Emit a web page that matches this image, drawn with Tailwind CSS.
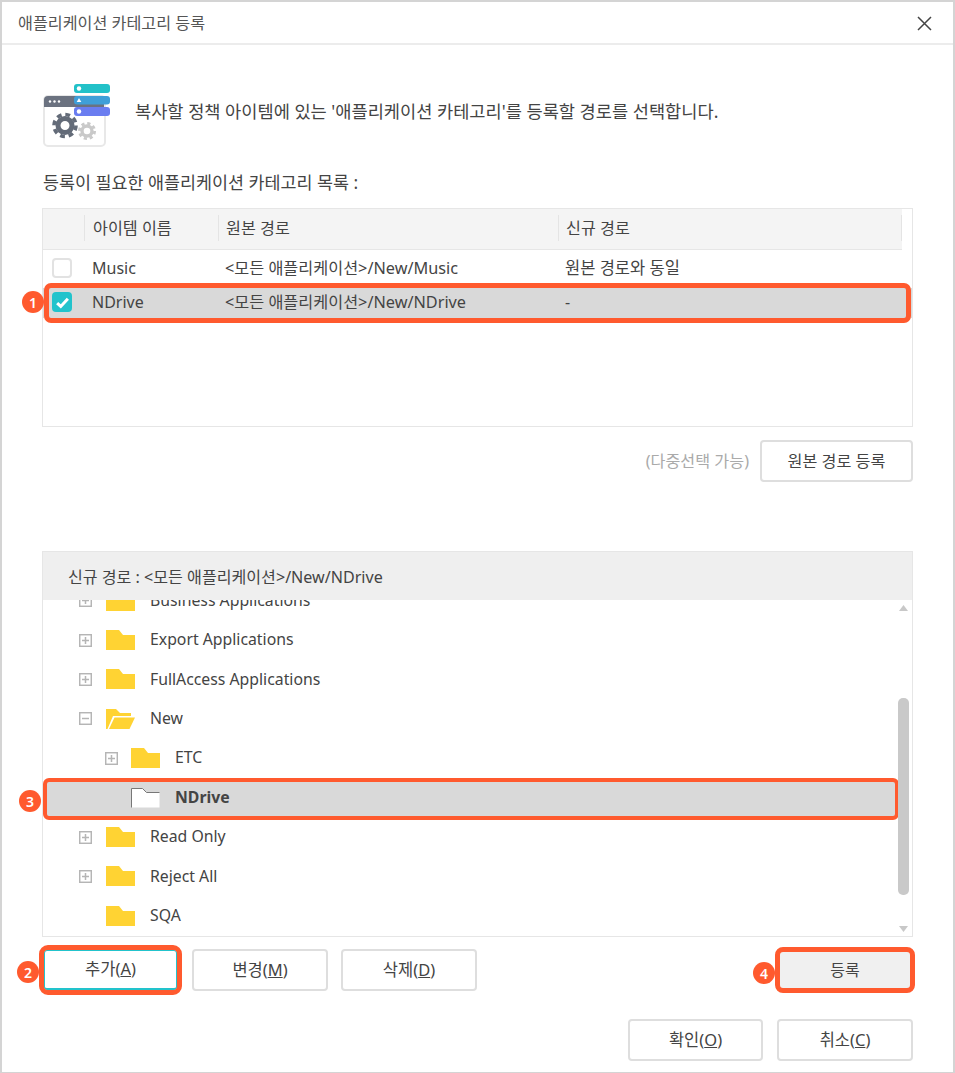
<!DOCTYPE html>
<html lang="ko">
<head>
    <meta charset="UTF-8">
    <title>애플리케이션 카테고리 등록</title>
    <script src="https://cdn.jsdelivr.net/npm/@tailwindcss/browser@4"></script>
</head>
<body class="bg-white font-['Noto_Sans','Noto_Sans_CJK_KR',sans-serif] text-[16px] text-[#444]">
<div class="w-[955px] h-[1073px] border-2 border-[#d4d4d4] border-b-[1px] flex flex-col overflow-hidden">

    <!-- title bar -->
    <div class="h-[43px] pt-[2px] shrink-0 border-b-2 border-[#ececec] flex items-center justify-between pl-[16px] pr-[21px]">
        <span class="text-[16.2px] text-[#555]">애플리케이션 카테고리 등록</span>
        <svg class="w-[15px] h-[15px]" viewBox="0 0 15 15" fill="none" stroke="#444" stroke-width="1.5"><path d="M1 1l13 13M14 1L1 14"/></svg>
    </div>

    <div class="flex-1 flex flex-col pl-[40px] pr-[40px]">
        <!-- intro -->
        <div class="flex items-center h-[76px] mt-[32px] gap-[23px]">
            <svg class="w-[70px] h-[66px] shrink-0" viewBox="0 0 70 66">
                <rect x="2" y="14" width="61" height="50" rx="4" fill="#fff" stroke="#e8e8e8" stroke-width="2"/>
                <path d="M2 18a4 4 0 0 1 4-4h56v11H2z" fill="#6b7280"/>
                <circle cx="8" cy="19.5" r="1.2" fill="#fff"/><circle cx="12.5" cy="19.5" r="1.2" fill="#fff"/><circle cx="17" cy="19.5" r="1.2" fill="#fff"/>
                <circle cx="23" cy="43.5" r="7" fill="none" stroke="#636b78" stroke-width="5"/>
                <circle cx="23" cy="43.5" r="11" fill="none" stroke="#636b78" stroke-width="3.6" stroke-dasharray="4.8 3.84"/>
                <circle cx="45" cy="49" r="5" fill="none" stroke="#c9c9c9" stroke-width="3.4"/>
                <circle cx="45" cy="49" r="7.6" fill="none" stroke="#c9c9c9" stroke-width="2.8" stroke-dasharray="3.2 2.77"/>
                <rect x="32" y="2" width="36" height="9" rx="3" fill="#22c1c8"/>
                <rect x="32" y="14" width="36" height="8.5" rx="3" fill="#3f9fd8"/>
                <rect x="32" y="25" width="36" height="9" rx="3" fill="#6a7df0"/>
                <circle cx="37" cy="6.5" r="2.2" fill="#fff"/><path d="M37 16l2.3 4h-4.6z" fill="#fff"/><circle cx="37" cy="29.5" r="2.2" fill="#fff"/>
            </svg>
            <p class="mb-[7px] text-[17.6px] text-[#444]">복사할 정책 아이템에 있는 '애플리케이션 카테고리'를 등록할 경로를 선택합니다.</p>
        </div>

        <p class="mt-[18px] h-[22px] leading-[22px] pl-px text-[17.4px] text-[#444]">등록이 필요한 애플리케이션 카테고리 목록 :</p>

        <!-- category table -->
        <div class="mt-[15px] h-[219px] w-[871px] border border-[#e6e6e6] relative">
            <div class="h-[41px] pb-[2px] w-[859px] bg-[#f4f4f4] border-b border-[#e6e6e6] flex items-center text-[16.2px]">
                <div class="w-[41px] h-[26px]"></div>
                <div class="w-[134px] h-[26px] border-l border-[#e4e4e4] pl-[8px] leading-[26px]">아이템 이름</div>
                <div class="w-[340px] h-[26px] border-l border-[#e4e4e4] pl-[7px] leading-[26px]">원본 경로</div>
                <div class="flex-1 h-[26px] border-l border-r border-[#e4e4e4] pl-[7px] leading-[26px]">신규 경로</div>
            </div>
            <div class="h-[37px] mt-px pb-[3px] flex items-center">
                <div class="w-[41px] pl-[9px]"><div class="w-[20px] h-[20px] rounded-[4px] border-2 border-[#e2e2e2] bg-white"></div></div>
                <div class="w-[134px] pl-[8px]">Music</div>
                <div class="w-[340px] pl-[7px] text-[16.25px]">&lt;모든 애플리케이션&gt;/New/Music</div>
                <div class="pl-[7px] text-[16.5px]">원본 경로와 동일</div>
            </div>
            <div class="h-[30px] pb-[2px] bg-[#d9d9d9] flex items-center relative">
                <div class="w-[41px] pl-[9px]">
                    <div class="w-[20px] h-[20px] rounded-[4px] bg-[#22c3cc] flex items-center justify-center">
                        <svg class="w-[15px] h-[15px]" viewBox="0 0 14 14" fill="none" stroke="#fff" stroke-width="2.8"><path d="M2 7.5l3.4 3.2L12 3.5"/></svg>
                    </div>
                </div>
                <div class="w-[134px] pl-[8px]">NDrive</div>
                <div class="w-[340px] pl-[7px] text-[16.25px]">&lt;모든 애플리케이션&gt;/New/NDrive</div>
                <div class="pl-[7px]">-</div>
                <div class="absolute left-[1px] right-[1px] top-[-5px] bottom-[-5px] border-[5px] border-[#ff5a2e] rounded-[7px]"></div>
                <div class="absolute left-[-21px] top-[3px] w-[22px] h-[22px] rounded-full bg-[#ff5a2e] text-white text-[14px] font-semibold flex items-center justify-center">1</div>
            </div>
        </div>

        <div class="mt-[13px] flex items-center justify-end gap-[11px]">
            <span class="text-[16.2px] text-[#aaa]">(다중선택 가능)</span>
            <button class="w-[153px] h-[42px] bg-white border-2 border-[#dedede] rounded-[4px] text-[16.2px]">원본 경로 등록</button>
        </div>

        <!-- new path tree -->
        <div class="mt-[69px] h-[386px] w-[871px] border border-[#e6e6e6] flex flex-col relative">
            <div class="h-[48px] pt-[3px] shrink-0 bg-[#efefef] flex items-center pl-[25px] text-[16.1px]">신규 경로 : &lt;모든 애플리케이션&gt;/New/NDrive</div>
            <div class="flex-1 overflow-hidden relative text-[15.8px]">
                <div class="-mt-[19px]">
                    <div class="h-[39.4px] flex items-center">
                        <svg class="ml-[36px] w-[13px] h-[13px]" viewBox="0 0 13 13" fill="none" stroke="#b5b5b5" stroke-width="1.5"><rect x=".7" y=".7" width="11.6" height="11.6"/><path d="M3 6.5h7M6.5 3v7"/></svg>
                        <svg class="ml-[14px] w-[29px] h-[20px]" viewBox="0 0 29 20"><path d="M0 0h13l4 5h12v15H0z" fill="#ffd333"/></svg>
                        <span class="ml-[15px]">Business Applications</span>
                    </div>
                    <div class="h-[39.4px] flex items-center">
                        <svg class="ml-[36px] w-[13px] h-[13px]" viewBox="0 0 13 13" fill="none" stroke="#b5b5b5" stroke-width="1.5"><rect x=".7" y=".7" width="11.6" height="11.6"/><path d="M3 6.5h7M6.5 3v7"/></svg>
                        <svg class="ml-[14px] w-[29px] h-[20px]" viewBox="0 0 29 20"><path d="M0 0h13l4 5h12v15H0z" fill="#ffd333"/></svg>
                        <span class="ml-[15px]">Export Applications</span>
                    </div>
                    <div class="h-[39.4px] flex items-center">
                        <svg class="ml-[36px] w-[13px] h-[13px]" viewBox="0 0 13 13" fill="none" stroke="#b5b5b5" stroke-width="1.5"><rect x=".7" y=".7" width="11.6" height="11.6"/><path d="M3 6.5h7M6.5 3v7"/></svg>
                        <svg class="ml-[14px] w-[29px] h-[20px]" viewBox="0 0 29 20"><path d="M0 0h13l4 5h12v15H0z" fill="#ffd333"/></svg>
                        <span class="ml-[15px]">FullAccess Applications</span>
                    </div>
                    <div class="h-[39.4px] flex items-center">
                        <svg class="ml-[36px] w-[13px] h-[13px]" viewBox="0 0 13 13" fill="none" stroke="#b5b5b5" stroke-width="1.5"><rect x=".7" y=".7" width="11.6" height="11.6"/><path d="M3 6.5h7"/></svg>
                        <svg class="ml-[14px] w-[29px] h-[20px]" viewBox="0 0 29 20"><path d="M0 20V0h10l4 4h11v3H7L1.5 20z" fill="#ffd333"/><path d="M8.5 8.5H29L23.5 20H3z" fill="#ffd333"/></svg>
                        <span class="ml-[15px]">New</span>
                    </div>
                    <div class="h-[39.4px] flex items-center">
                        <svg class="ml-[62px] w-[13px] h-[13px]" viewBox="0 0 13 13" fill="none" stroke="#b5b5b5" stroke-width="1.5"><rect x=".7" y=".7" width="11.6" height="11.6"/><path d="M3 6.5h7M6.5 3v7"/></svg>
                        <svg class="ml-[13px] w-[29px] h-[20px]" viewBox="0 0 29 20"><path d="M0 0h13l4 5h12v15H0z" fill="#ffd333"/></svg>
                        <span class="ml-[15px]">ETC</span>
                    </div>
                    <div class="h-[39.4px] flex items-center relative">
                        <div class="absolute left-0 w-[856px] top-0 bottom-[-3px] bg-[#d9d9d9] border-[4px] border-[#ff5a2e] rounded-[6px]"></div>
                        <svg class="relative ml-[88px] w-[29px] h-[20px]" viewBox="0 0 29 20"><path d="M.5 19.5V.5h11l4 4h13v15z" fill="#fff"/><path d="M.5 19.5V.5h11l4 4h13" fill="none" stroke="#777"/></svg>
                        <span class="relative ml-[15px] font-bold">NDrive</span>
                    </div>
                    <div class="h-[39.4px] flex items-center">
                        <svg class="ml-[36px] w-[13px] h-[13px]" viewBox="0 0 13 13" fill="none" stroke="#b5b5b5" stroke-width="1.5"><rect x=".7" y=".7" width="11.6" height="11.6"/><path d="M3 6.5h7M6.5 3v7"/></svg>
                        <svg class="ml-[14px] w-[29px] h-[20px]" viewBox="0 0 29 20"><path d="M0 0h13l4 5h12v15H0z" fill="#ffd333"/></svg>
                        <span class="ml-[15px]">Read Only</span>
                    </div>
                    <div class="h-[39.4px] flex items-center">
                        <svg class="ml-[36px] w-[13px] h-[13px]" viewBox="0 0 13 13" fill="none" stroke="#b5b5b5" stroke-width="1.5"><rect x=".7" y=".7" width="11.6" height="11.6"/><path d="M3 6.5h7M6.5 3v7"/></svg>
                        <svg class="ml-[14px] w-[29px] h-[20px]" viewBox="0 0 29 20"><path d="M0 0h13l4 5h12v15H0z" fill="#ffd333"/></svg>
                        <span class="ml-[15px]">Reject All</span>
                    </div>
                    <div class="h-[39.4px] flex items-center">
                        <svg class="ml-[63px] w-[29px] h-[20px]" viewBox="0 0 29 20"><path d="M0 0h13l4 5h12v15H0z" fill="#ffd333"/></svg>
                        <span class="ml-[15px]">SQA</span>
                    </div>
                </div>
                <!-- scrollbar -->
                <svg class="absolute right-[4px] top-[5px] w-[9px] h-[6px]" viewBox="0 0 9 6"><path d="M4.5 0L9 6H0z" fill="#c8c8c8"/></svg>
                <div class="absolute right-[3px] top-[98px] w-[11px] h-[197px] rounded-[5px] bg-[#c9c9c9]"></div>
                <svg class="absolute right-[4px] bottom-[4px] w-[9px] h-[6px]" viewBox="0 0 9 6"><path d="M4.5 6L9 0H0z" fill="#c8c8c8"/></svg>
            </div>
            <div class="absolute left-[-24px] top-[238px] w-[22px] h-[22px] rounded-full bg-[#ff5a2e] text-white text-[14px] font-semibold flex items-center justify-center">3</div>
        </div>

        <!-- tree actions -->
        <div class="mt-[12px] h-[42px] flex items-center">
            <div class="relative ml-[2px] w-[133px] h-[40px]">
                <button class="w-full h-full bg-white border border-b-2 border-[#22c3cc] rounded-[3px] text-[16.5px]">추가(<u>A</u>)</button>
                <div class="absolute -inset-[5px] border-[5px] border-[#ff5a2e] rounded-[9px]"></div>
                <div class="absolute left-[-27px] top-[11px] w-[22px] h-[22px] rounded-full bg-[#ff5a2e] text-white text-[14px] font-semibold flex items-center justify-center">2</div>
            </div>
            <button class="ml-[15px] w-[136px] h-[42px] bg-white border-2 border-[#dedede] rounded-[4px] text-[16.5px]">변경(<u>M</u>)</button>
            <button class="ml-[13px] w-[136px] h-[42px] bg-white border-2 border-[#dedede] rounded-[4px] text-[16.5px]">삭제(<u>D</u>)</button>
            <div class="relative ml-auto w-[136px] h-[42px]">
                <button class="w-full h-full bg-[#f0f0f0] rounded-[4px] text-[16px]">등록</button>
                <div class="absolute -inset-[2px] border-[5px] border-[#ff5a2e] rounded-[8px]"></div>
                <div class="absolute left-[-24px] top-[13px] w-[22px] h-[22px] rounded-full bg-[#ff5a2e] text-white text-[14px] font-semibold flex items-center justify-center">4</div>
            </div>
        </div>

        <!-- dialog actions -->
        <div class="mt-[28px] flex justify-end gap-[14px]">
            <button class="w-[135px] h-[42px] bg-white border-2 border-[#dedede] rounded-[4px] text-[16.5px]">확인(<u>O</u>)</button>
            <button class="w-[136px] h-[42px] bg-white border-2 border-[#dedede] rounded-[4px] text-[16.5px]">취소(<u>C</u>)</button>
        </div>
    </div>
</div>
</body>
</html>
